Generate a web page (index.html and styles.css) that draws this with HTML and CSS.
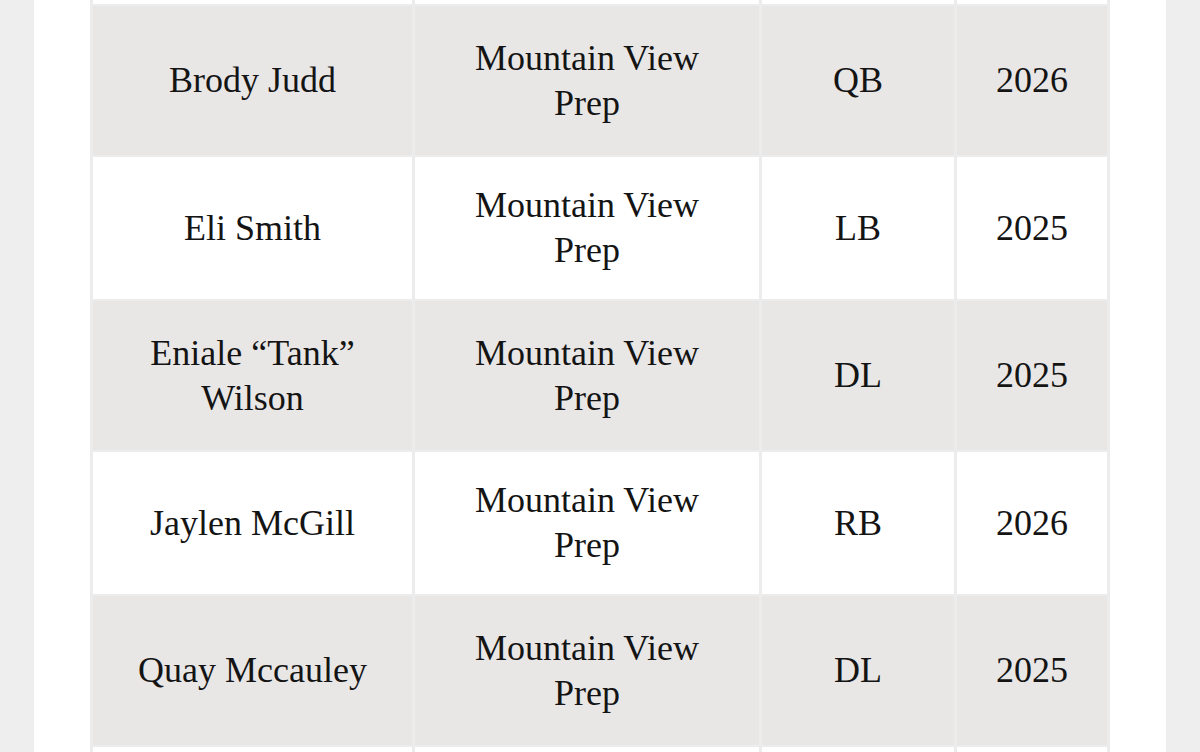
FILE: index.html
```html
<!DOCTYPE html>
<html>
<head>
<meta charset="utf-8">
<link rel="stylesheet" href="styles.css">
</head>
<body>
<div class="page">
  <div class="panel">
    <table class="roster">
      <colgroup>
        <col class="c-name"><col class="c-school"><col class="c-pos"><col class="c-year">
      </colgroup>
      <tr class="row-partial"><td></td><td></td><td></td><td></td></tr>
      <tr class="row-odd"><td>Brody Judd</td><td>Mountain View<br>Prep</td><td>QB</td><td>2026</td></tr>
      <tr class="row-even"><td>Eli Smith</td><td>Mountain View<br>Prep</td><td>LB</td><td>2025</td></tr>
      <tr class="row-odd"><td>Eniale “Tank”<br>Wilson</td><td>Mountain View<br>Prep</td><td>DL</td><td>2025</td></tr>
      <tr class="row-even"><td>Jaylen McGill</td><td>Mountain View<br>Prep</td><td>RB</td><td>2026</td></tr>
      <tr class="row-odd"><td>Quay Mccauley</td><td>Mountain View<br>Prep</td><td>DL</td><td>2025</td></tr>
      <tr class="row-even row-tail"><td></td><td></td><td></td><td></td></tr>
    </table>
  </div>
</div>
</body>
</html>
```
FILE: styles.css
```css
html, body {
  margin: 0;
  padding: 0;
  background: #eeeeee;
  overflow: hidden;
}
.page {
  height: 752px;
  padding: 0 34px;
  box-sizing: border-box;
}
.panel {
  background: #ffffff;
  height: 752px;
  padding: 0 55px 0 56px;
  overflow: hidden;
}
.roster {
  width: 1020px;
  margin-top: -2px;
  border-collapse: separate;
  border-spacing: 3px 2px;
  background: #ececec;
  table-layout: fixed;
  font-family: "Liberation Serif", "Times New Roman", serif;
  font-size: 36px;
  line-height: 45px;
  color: #141414;
}
.c-name { width: 319px; }
.c-school { width: 344px; }
.c-pos { width: 192px; }
.c-year { width: 150px; }
.roster td {
  padding: 0;
  text-align: center;
  vertical-align: middle;
}
.row-partial td { height: 4px; background: #ffffff; }
.row-odd td { height: 149px; background: #e9e7e6; }
.row-even td { height: 142px; background: #ffffff; }
.row-tail td { height: 40px; }
```
